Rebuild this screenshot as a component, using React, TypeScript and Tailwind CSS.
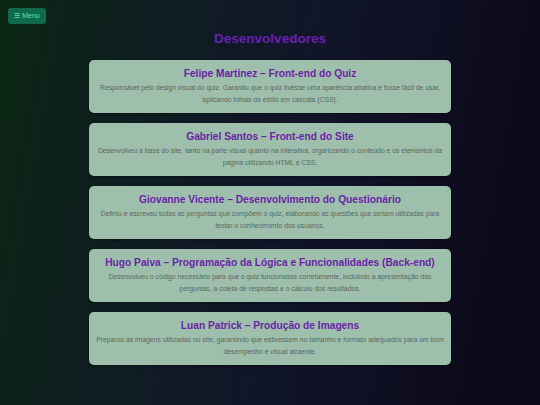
const DEVS = [
  {
    name: 'Felipe Martinez – Front-end do Quiz',
    text: 'Responsável pelo design visual do quiz. Garantiu que o quiz tivesse uma aparência atrativa e fosse fácil de usar, aplicando folhas de estilo em cascata (CSS).',
  },
  {
    name: 'Gabriel Santos – Front-end do Site',
    text: 'Desenvolveu a base do site, tanto na parte visual quanto na interativa, organizando o conteúdo e os elementos da página utilizando HTML e CSS.',
  },
  {
    name: 'Giovanne Vicente – Desenvolvimento do Questionário',
    text: 'Definiu e escreveu todas as perguntas que compõem o quiz, elaborando as questões que seriam utilizadas para testar o conhecimento dos usuários.',
  },
  {
    name: 'Hugo Paiva – Programação da Lógica e Funcionalidades (Back-end)',
    text: 'Desenvolveu o código necessário para que o quiz funcionasse corretamente, incluindo a apresentação das perguntas, a coleta de respostas e o cálculo dos resultados.',
  },
  {
    name: 'Luan Patrick – Produção de Imagens',
    text: 'Preparou as imagens utilizadas no site, garantindo que estivessem no tamanho e formato adequados para um bom desempenho e visual atraente.',
  },
];

export default function App() {
  return (
    <div className="relative min-h-[405px] w-full bg-[linear-gradient(100deg,#0b2714_0%,#0f1c22_30%,#11152a_55%,#0d0d1f_80%,#0a0918_100%)] font-['Liberation_Sans',Arial,sans-serif]">
      {/* Menu */}
      <button className="absolute left-[8px] top-[8px] flex h-[16px] w-[38px] items-center justify-center gap-[2px] rounded-[3px] bg-[#0e6a4b] text-[7px] text-[#6fdcaa]">
        <span>☰</span>
        <span>Menu</span>
      </button>

      <div className="flex flex-col items-center pt-[30px]">
        <h1 className="text-[13.5px] font-bold leading-[18px] text-[#6c1fb0]">Desenvolvedores</h1>

        <div className="mt-[12px] flex w-[362px] flex-col gap-[10px]">
          {DEVS.map((d) => (
            <div
              key={d.name}
              className="rounded-[5px] bg-[#9dbfab] px-[7px] pb-[7px] pt-[7px] text-center shadow-[0_1px_3px_rgba(0,0,0,0.4)]"
            >
              <h3 className="text-[10.2px] font-bold leading-[13px] text-[#6c1fa8]">{d.name}</h3>
              <p className="mt-[2px] text-[6.8px] leading-[12px] text-[#5b6962]">{d.text}</p>
            </div>
          ))}
        </div>
      </div>
    </div>
  );
}
